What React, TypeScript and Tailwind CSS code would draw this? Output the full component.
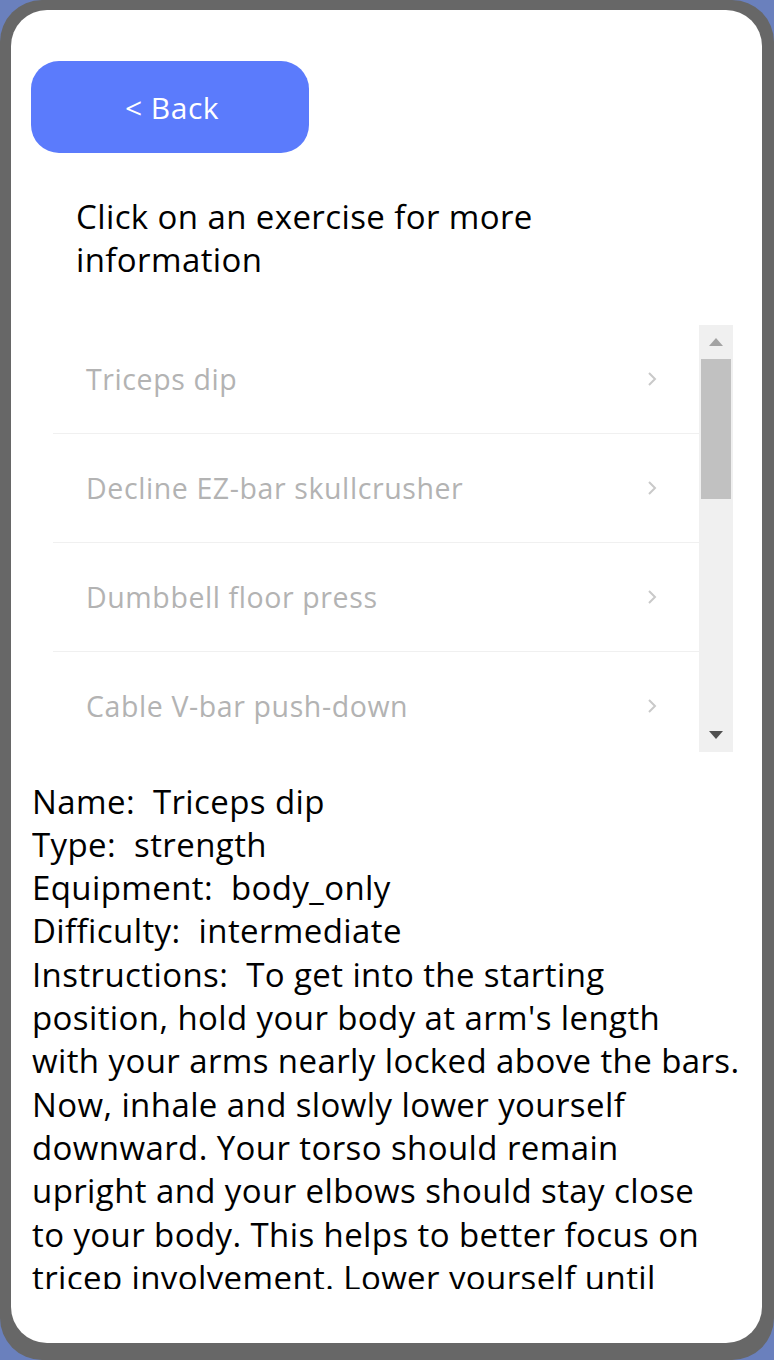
const exercises = [
  "Triceps dip",
  "Decline EZ-bar skullcrusher",
  "Dumbbell floor press",
  "Cable V-bar push-down",
  "Close-grip bench press",
  "Bench dip",
];

const fields: [string, string][] = [
  ["Name", "Triceps dip"],
  ["Type", "strength"],
  ["Equipment", "body_only"],
  ["Difficulty", "intermediate"],
];

// lines kept as they wrap in the panel
const instructionLines = [
  "Instructions:  To get into the starting",
  "position, hold your body at arm's length",
  "with your arms nearly locked above the bars.",
  "Now, inhale and slowly lower yourself",
  "downward. Your torso should remain",
  "upright and your elbows should stay close",
  "to your body. This helps to better focus on",
  "tricep involvement. Lower yourself until",
  "there is a 90 degree angle formed between",
  "the upper arm and forearm.",
];

function Chevron() {
  return (
    <svg width="12" height="20" viewBox="0 0 12 20" fill="none">
      <path d="M3 4 L9 10 L3 16" stroke="#c9c9c9" strokeWidth="2" />
    </svg>
  );
}

function FakeScrollbar() {
  return (
    <div className="w-[34px] shrink-0 bg-[#f0f0f0] flex flex-col items-center">
      <div className="h-[34px] flex items-center justify-center">
        <svg width="14" height="8" viewBox="0 0 14 8">
          <path d="M0 8 L7 0 L14 8 Z" fill="#a3a3a3" />
        </svg>
      </div>
      <div className="w-[30px] h-[140px] bg-[#c1c1c1]" />
      <div className="flex-1" />
      <div className="h-[34px] flex items-center justify-center">
        <svg width="14" height="8" viewBox="0 0 14 8">
          <path d="M0 0 L14 0 L7 8 Z" fill="#505050" />
        </svg>
      </div>
    </div>
  );
}

export default function App() {
  return (
    <div
      className="w-[774px] h-[1360px] bg-[#6a80bd]"
      style={{ fontFamily: '"Open Sans", "Noto Sans", sans-serif' }}
    >
      <div className="w-full h-full bg-[#676767] rounded-[42px] pt-[10px] pl-[11px] pr-[12px] pb-[17px]">
        <div className="w-full h-full bg-white rounded-[36px] flex flex-col overflow-hidden">
          <button className="ml-[20px] mt-[51px] w-[278px] h-[92px] pl-[4px] rounded-[28px] bg-[#5b7bfc] text-white text-[30px] tracking-[0.5px]">
            &lt; Back
          </button>

          <p className="ml-[65px] mt-[42px] max-w-[580px] text-[33px] leading-[43.3px] text-black tracking-[0.4px]">
            Click on an exercise for more information
          </p>

          <div className="ml-[42px] mr-[29px] mt-[43px] h-[427px] flex overflow-hidden">
            <ul className="flex-1 overflow-hidden">
              {exercises.map((name) => (
                <li
                  key={name}
                  className="h-[109px] flex items-center justify-between pl-[33px] pr-[41px] border-b border-[#f0f0f0] text-[#b3b3b3] text-[28.5px] tracking-[0.6px]"
                >
                  <span className="pt-[2px]">{name}</span>
                  <Chevron />
                </li>
              ))}
            </ul>
            <FakeScrollbar />
          </div>

          <div className="ml-[21px] mr-[12px] mt-[28px] h-[509px] overflow-hidden text-[33px] leading-[43.3px] text-black tracking-[0.4px] whitespace-pre">
            {fields.map(([label, value]) => (
              <p key={label}>
                {label}:{"  "}
                {value}
              </p>
            ))}
            {instructionLines.map((line) => (
              <p key={line}>{line}</p>
            ))}
          </div>
        </div>
      </div>
    </div>
  );
}
